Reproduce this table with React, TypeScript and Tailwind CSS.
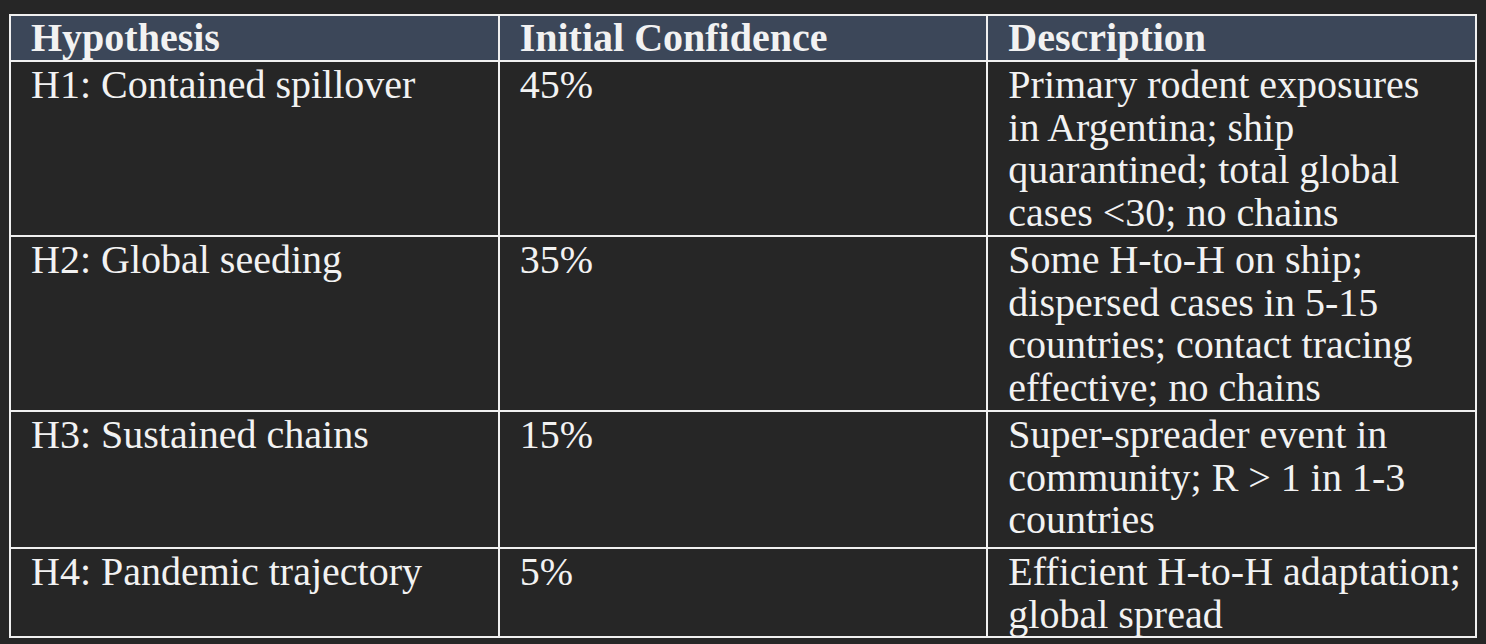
import React from 'react';

const rows: { hyp: string; conf: string; desc: string[]; h: string }[] = [
  {
    hyp: 'H1: Contained spillover',
    conf: '45%',
    desc: ['Primary rodent exposures', 'in Argentina; ship', 'quarantined; total global', 'cases <30; no chains'],
    h: 'h-[175px]',
  },
  {
    hyp: 'H2: Global seeding',
    conf: '35%',
    desc: ['Some H-to-H on ship;', 'dispersed cases in 5-15', 'countries; contact tracing', 'effective; no chains'],
    h: 'h-[175px]',
  },
  {
    hyp: 'H3: Sustained chains',
    conf: '15%',
    desc: ['Super-spreader event in', 'community; R > 1 in 1-3', 'countries'],
    h: 'h-[137px]',
  },
  {
    hyp: 'H4: Pandemic trajectory',
    conf: '5%',
    desc: ['Efficient H-to-H adaptation;', 'global spread'],
    h: 'h-[84px]',
  },
];

export default function App() {
  return (
    <div className="w-full h-[644px] bg-[#262626] pt-[14px] pl-[9px] font-['Liberation_Serif',serif] text-[#f2f2f2] text-[40px] leading-[42.5px]">
      <table className="w-[1468px] table-fixed border-collapse border-2 border-[#f0f0f0]">
        <thead>
          <tr className="h-[45px] bg-[#3c4759]">
            {['Hypothesis', 'Initial Confidence', 'Description'].map((t) => (
              <th key={t} className="border-2 border-[#f0f0f0] px-[20px] text-left align-top font-bold leading-[44px]">
                {t}
              </th>
            ))}
          </tr>
        </thead>
        <tbody>
          {rows.map((r) => (
            <tr key={r.hyp} className={r.h}>
              <td className="border-2 border-[#f0f0f0] px-[20px] pt-[2px] align-top">{r.hyp}</td>
              <td className="border-2 border-[#f0f0f0] px-[20px] pt-[2px] align-top">{r.conf}</td>
              <td className="border-2 border-[#f0f0f0] px-[20px] pt-[2px] align-top">
                {r.desc.map((l) => (
                  <span key={l} className="block whitespace-nowrap">
                    {l}
                  </span>
                ))}
              </td>
            </tr>
          ))}
        </tbody>
      </table>
    </div>
  );
}
